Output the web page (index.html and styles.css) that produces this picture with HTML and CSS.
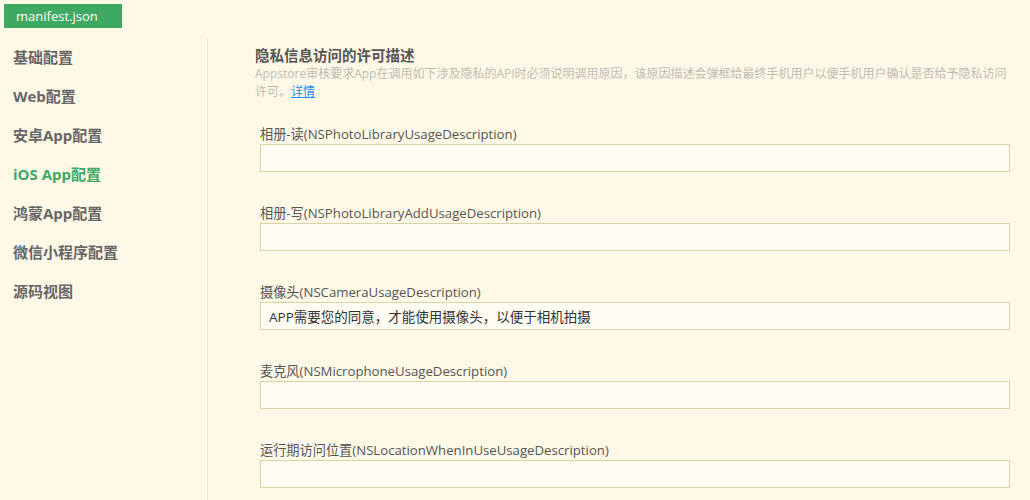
FILE: index.html
```html
<!DOCTYPE html>
<html lang="zh-CN">
<head>
  <meta charset="UTF-8">
  <meta name="viewport" content="width=device-width, initial-scale=1.0">
  <title>manifest.json</title>
  <link rel="stylesheet" href="styles.css">
</head>
<body>

  <div class="tab-bar">
    <div class="tab">manifest.json</div>
  </div>

  <div class="layout">
    <ul class="side-nav">
      <li>基础配置</li>
      <li>Web配置</li>
      <li>安卓App配置</li>
      <li class="active">iOS App配置</li>
      <li>鸿蒙App配置</li>
      <li>微信小程序配置</li>
      <li>源码视图</li>
    </ul>

    <div class="content">
      <h2 class="section-title">隐私信息访问的许可描述</h2>
      <p class="section-desc">Appstore审核要求App在调用如下涉及隐私的API时必须说明调用原因，该原因描述会弹框给最终手机用户以便手机用户确认是否给予隐私访问许可。<a href="#">详情</a></p>

      <div class="field">
        <label>相册-读(NSPhotoLibraryUsageDescription)</label>
        <input type="text" value="">
      </div>
      <div class="field">
        <label>相册-写(NSPhotoLibraryAddUsageDescription)</label>
        <input type="text" value="">
      </div>
      <div class="field">
        <label>摄像头(NSCameraUsageDescription)</label>
        <input type="text" value="APP需要您的同意，才能使用摄像头，以便于相机拍摄">
      </div>
      <div class="field">
        <label>麦克风(NSMicrophoneUsageDescription)</label>
        <input type="text" value="">
      </div>
      <div class="field">
        <label>运行期访问位置(NSLocationWhenInUseUsageDescription)</label>
        <input type="text" value="">
      </div>
    </div>
  </div>

</body>
</html>
```

FILE: styles.css
```css
body {
  margin: 0;
  background: #fef8e7;
  font-family: "Open Sans", "Noto Sans CJK SC", sans-serif;
  color: #555;
  height: 500px;
  overflow: hidden;
}
.tab-bar {
  padding: 4px 0 0 4px;
  height: 38px;
  box-sizing: border-box;
}
.tab {
  display: inline-block;
  width: 118px;
  height: 24px;
  line-height: 24px;
  box-sizing: border-box;
  padding-left: 12px;
  background: #3fa863;
  color: #fff;
  font-size: 13px;
}
.layout {
  display: flex;
}
.side-nav {
  list-style: none;
  margin: 0;
  padding: 0;
  width: 208px;
  flex-shrink: 0;
  border-right: 1px solid #f1e9d1;
  box-sizing: border-box;
  min-height: 470px;
}
.side-nav li {
  padding-left: 13px;
  height: 39px;
  line-height: 39px;
  font-size: 15px;
  font-weight: bold;
  color: #666;
}
.side-nav li.active {
  color: #3fa863;
}
.content {
  flex: 1;
  padding: 9px 20px 0 47px;
}
.section-title {
  margin: 0;
  font-size: 14.5px;
  line-height: 18px;
  font-weight: bold;
  color: #555;
}
.section-desc {
  margin: 0 0 23px;
  font-size: 12px;
  line-height: 18px;
  color: #c0bcb2;
}
.section-desc a {
  color: #1e8fe6;
}
.field {
  padding-left: 5px;
  margin-bottom: 31px;
}
.field label {
  display: block;
  font-size: 13.2px;
  line-height: 20px;
  color: #555;
}
.field input {
  display: block;
  width: 100%;
  height: 28px;
  box-sizing: border-box;
  margin: 0;
  border: 1px solid #ddd1a8;
  background: #fffcf3;
  padding: 0 8px;
  font-family: "Open Sans", "Noto Sans CJK SC", sans-serif;
  font-size: 13.5px;
  color: #333;
  outline: none;
}
```
